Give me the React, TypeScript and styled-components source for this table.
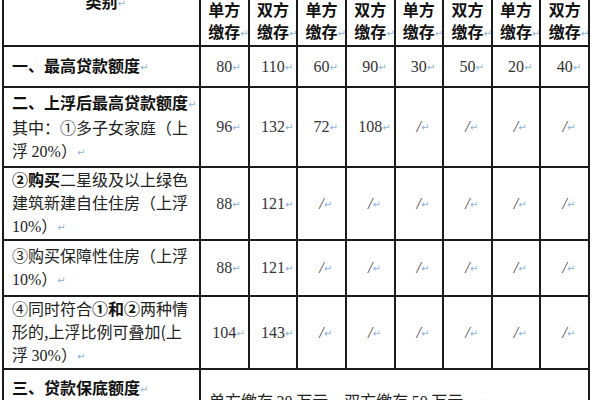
import styled, { createGlobalStyle } from "styled-components";

const GlobalStyle = createGlobalStyle`
  html, body {
    margin: 0;
    padding: 0;
    background: #fff;
  }
  body {
    overflow: hidden;
  }
`;

const Sheet = styled.div`
  width: 600px;
  height: 400px;
  overflow: hidden;
  padding-left: 2px;
  box-sizing: border-box;
`;

const Grid = styled.table`
  border-collapse: collapse;
  table-layout: fixed;
  width: 588px;
  margin-top: -43px;
  font-family: "Noto Sans CJK SC", sans-serif;
  color: #222;
`;

const Col = styled.col<{ $w?: number }>`
  width: ${({ $w }) => ($w ? `${$w}px` : "auto")};
`;

const Row = styled.tr<{ $h: number }>`
  height: ${({ $h }) => $h}px;
`;

const Cell = styled.td`
  border: 2px solid #1b1b1b;
  padding: 0;
  font-size: 16px;
  line-height: 23px;
  vertical-align: middle;
`;

const HeadCell = styled(Cell)`
  text-align: center;
  font-weight: 700;
  line-height: 22px;
  color: #111;
`;

const LabelCell = styled(Cell)<{ $top?: boolean }>`
  padding: ${({ $top }) => ($top ? "6px 6px 0 8px" : "0 6px 0 8px")};
  vertical-align: ${({ $top }) => ($top ? "top" : "middle")};
  white-space: nowrap;
`;

const NumCell = styled(Cell)`
  text-align: center;
  font-family: "Liberation Serif", "Noto Sans CJK SC", serif;
  font-size: 16px;
  color: #333;
`;

const SlashCell = styled(NumCell)`
  font-style: italic;
  color: #444;
`;

const NoteCell = styled(Cell)`
  padding: 19px 8px 0;
  vertical-align: top;
  white-space: nowrap;
`;

const Strong = styled.span`
  font-weight: 700;
  color: #111;
`;

const Latin = styled.span`
  font-family: "Liberation Serif", serif;
`;

const Mark = styled.span`
  display: inline-block;
  width: 0;
  white-space: nowrap;
  font-family: "DejaVu Sans", sans-serif;
  font-size: 10px;
  font-weight: 400;
  font-style: normal;
  color: #8db3e2;
  vertical-align: 1px;
`;

const Values = ({ values }: { values: string[] }) => (
  <>
    {values.map((v, i) =>
      v === "/" ? (
        <SlashCell key={i}>
          /<Mark>↵</Mark>
        </SlashCell>
      ) : (
        <NumCell key={i}>
          {v}
          <Mark>↵</Mark>
        </NumCell>
      )
    )}
  </>
);

const heads = ["单方", "双方", "单方", "双方", "单方", "双方", "单方", "双方"];

const App = () => {
  return (
    <>
      <GlobalStyle />
      <Sheet>
        <Grid>
          <colgroup>
            <Col $w={197} />
            {heads.map((_, i) => (
              <Col key={i} />
            ))}
          </colgroup>
          <tbody>
            <Row $h={39}>
              <HeadCell rowSpan={2}>
                类别<Mark>↵</Mark>
              </HeadCell>
              <HeadCell colSpan={2} />
              <HeadCell colSpan={2} />
              <HeadCell colSpan={2} />
              <HeadCell colSpan={2} />
            </Row>
            <Row $h={48}>
              {heads.map((h, i) => (
                <HeadCell key={i}>
                  {h}
                  <br />
                  缴存<Mark>↵</Mark>
                </HeadCell>
              ))}
            </Row>
            <Row $h={41}>
              <LabelCell>
                <Strong>一、最高贷款额度</Strong>
                <Mark>↵</Mark>
              </LabelCell>
              <Values values={["80", "110", "60", "90", "30", "50", "20", "40"]} />
            </Row>
            <Row $h={80}>
              <LabelCell>
                <Strong>二、上浮后最高贷款额度</Strong>
                <Mark>↵</Mark>
                <br />
                其中：①多子女家庭（上
                <br />
                浮 <Latin>20%</Latin>）<Mark>↵</Mark>
              </LabelCell>
              <Values values={["96", "132", "72", "108", "/", "/", "/", "/"]} />
            </Row>
            <Row $h={73}>
              <LabelCell>
                <Strong>②购买</Strong>二星级及以上绿色
                <br />
                建筑新建自住住房（上浮
                <br />
                <Latin>10%</Latin>）<Mark>↵</Mark>
              </LabelCell>
              <Values values={["88", "121", "/", "/", "/", "/", "/", "/"]} />
            </Row>
            <Row $h={56}>
              <LabelCell>
                ③购买保障性住房（上浮
                <br />
                <Latin>10%</Latin>）<Mark>↵</Mark>
              </LabelCell>
              <Values values={["88", "121", "/", "/", "/", "/", "/", "/"]} />
            </Row>
            <Row $h={73}>
              <LabelCell>
                ④同时符合<Strong>①和②</Strong>两种情
                <br />
                形的,上浮比例可叠加(上
                <br />
                浮 <Latin>30%</Latin>）<Mark>↵</Mark>
              </LabelCell>
              <Values values={["104", "143", "/", "/", "/", "/", "/", "/"]} />
            </Row>
            <Row $h={62}>
              <LabelCell $top>
                <Strong>三、贷款保底额度</Strong>
                <Mark>↵</Mark>
              </LabelCell>
              <NoteCell colSpan={8}>
                单方缴存 <Latin>30</Latin> 万元，双方缴存 <Latin>50</Latin> 万元。
                <Mark>↵</Mark>
              </NoteCell>
            </Row>
          </tbody>
        </Grid>
      </Sheet>
    </>
  );
};

export default App;
